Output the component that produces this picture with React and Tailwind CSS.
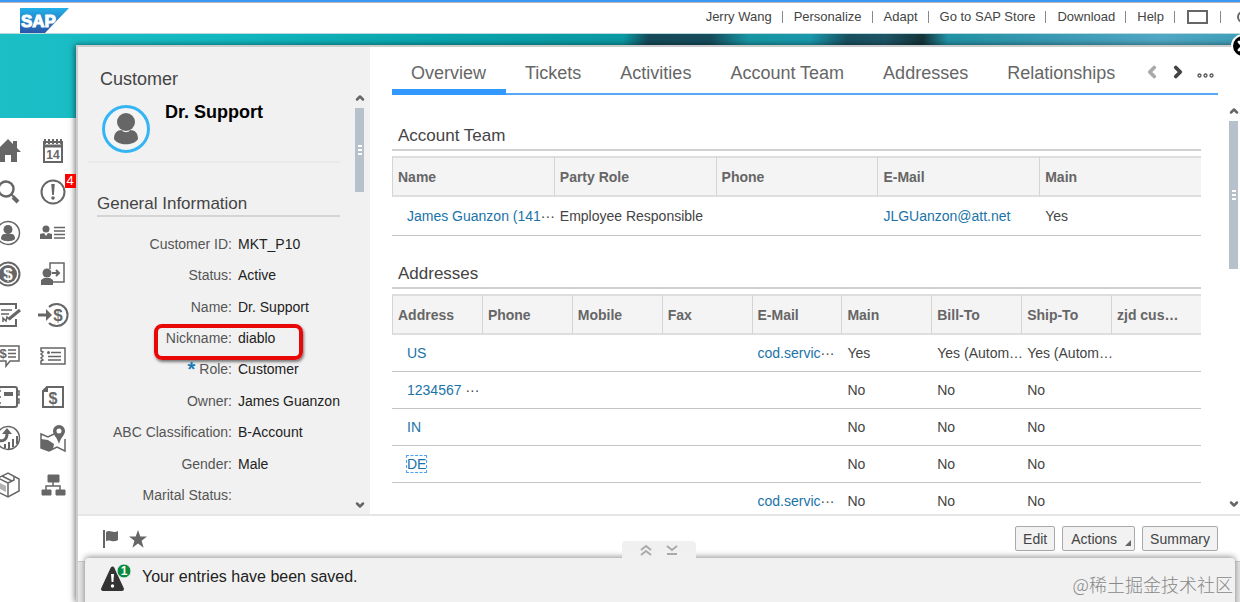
import { useState } from 'react'
import { ChevronDown, ChevronLeft, ChevronRight, ChevronUp, X } from 'lucide-react'

const TOP_LINKS = ['Jerry Wang', 'Personalize', 'Adapt', 'Go to SAP Store', 'Download', 'Help']

const TABS = ['Overview', 'Tickets', 'Activities', 'Account Team', 'Addresses', 'Relationships']

const FIELDS = [
  { label: 'Customer ID', value: 'MKT_P10' },
  { label: 'Status', value: 'Active' },
  { label: 'Name', value: 'Dr. Support' },
  { label: 'Nickname', value: 'diablo', marked: true },
  { label: 'Role', value: 'Customer', required: true },
  { label: 'Owner', value: 'James Guanzon' },
  { label: 'ABC Classification', value: 'B-Account' },
  { label: 'Gender', value: 'Male' },
  { label: 'Marital Status', value: '' },
]

const TEAM_COLUMNS = ['Name', 'Party Role', 'Phone', 'E-Mail', 'Main']
const TEAM_ROWS = [
  [
    { link: 'James Guanzon (141', cut: true },
    'Employee Responsible',
    '',
    { link: 'JLGUanzon@att.net' },
    'Yes',
  ],
]

const ADDRESS_COLUMNS = ['Address', 'Phone', 'Mobile', 'Fax', 'E-Mail', 'Main', 'Bill-To', 'Ship-To', 'zjd cus…']
const ADDRESS_ROWS = [
  [{ link: 'US' }, '', '', '', { link: 'cod.servic', cut: true }, 'Yes', 'Yes (Autom…', 'Yes (Autom…', ''],
  [{ link: '1234567 ', cut: true }, '', '', '', '', 'No', 'No', 'No', ''],
  [{ link: 'IN' }, '', '', '', '', 'No', 'No', 'No', ''],
  [{ link: 'DE', focused: true }, '', '', '', '', 'No', 'No', 'No', ''],
  ['', '', '', '', { link: 'cod.servic', cut: true }, 'No', 'No', 'No', ''],
]

function Glyph({ children }) {
  return (
    <svg
      viewBox="0 0 26 26"
      className="w-[26px] h-[26px] overflow-visible"
      fill="none"
      stroke="currentColor"
      strokeWidth="2"
    >
      {children}
    </svg>
  )
}

function Dollar({ x = 13, y = 18, size = 15 }) {
  return (
    <text
      x={x}
      y={y}
      fontSize={size}
      fontWeight="bold"
      textAnchor="middle"
      fill="currentColor"
      stroke="none"
    >
      $
    </text>
  )
}

// Icons of the side menu, left and right column in turn
const MENU = [
  {
    name: 'Home',
    icon: (
      <Glyph>
        <path d="M13 1 0 14h4v10h6v-7h6v7h6V14h4l-4-4V3h-4v3z" fill="currentColor" stroke="none" />
      </Glyph>
    ),
  },
  {
    name: 'Calendar',
    icon: (
      <Glyph>
        <path d="M4 4h18v20H4z" />
        <path d="M4 8h18" strokeWidth="3" />
        <path d="M5 1v5M9 1v5M13 1v5M17 1v5M21 1v5" strokeWidth="2" />
        <text x="13" y="21" fontSize="12" fontWeight="bold" textAnchor="middle" fill="currentColor" stroke="none">
          14
        </text>
      </Glyph>
    ),
  },
  {
    name: 'Search',
    icon: (
      <Glyph>
        <circle cx="11" cy="10" r="7.5" strokeWidth="2.5" />
        <path d="m16 15 3 3" strokeWidth="2" />
        <path d="m18 18 5 5" strokeWidth="4" />
      </Glyph>
    ),
  },
  {
    name: 'Alerts',
    badge: 4,
    icon: (
      <Glyph>
        <circle cx="13" cy="13" r="11.5" />
        <path d="M11.2 5h3.6l-1 11h-1.6z" fill="currentColor" stroke="none" />
        <circle cx="13" cy="19" r="1.8" fill="currentColor" stroke="none" />
      </Glyph>
    ),
  },
  {
    name: 'People',
    icon: (
      <Glyph>
        <circle cx="13" cy="13" r="11.5" strokeWidth="1.5" />
        <circle cx="13" cy="9.5" r="4.5" fill="currentColor" stroke="none" />
        <path d="M10 14c-3 0-4 2-4 5 3 3 11 3 14 0 0-3-1-5-4-5z" fill="currentColor" stroke="none" />
      </Glyph>
    ),
  },
  {
    name: 'Contacts',
    icon: (
      <Glyph>
        <circle cx="6" cy="9" r="3.5" fill="currentColor" stroke="none" />
        <path d="M0 19v-5l4-1 2 3 2-3 4 1v5z" fill="currentColor" stroke="none" />
        <path d="M14 7.500h11M14 11h11M14 14.500h11M14 18h11" strokeWidth="1.500" />
      </Glyph>
    ),
  },
  {
    name: 'Sales',
    icon: (
      <Glyph>
        <circle cx="13" cy="13" r="11.500" strokeWidth="2" />
        <circle cx="13" cy="13" r="9" fill="currentColor" stroke="none" />
        <text x="13" y="19" fontSize="17" fontWeight="bold" textAnchor="middle" fill="white" stroke="none">
          $
        </text>
      </Glyph>
    ),
  },
  {
    name: 'Visits',
    icon: (
      <Glyph>
        <path d="M10 8V2h14v19H13" strokeWidth="1.500" />
        <circle cx="7" cy="12" r="4.500" fill="currentColor" stroke="none" />
        <path d="M1 24v-5l3-2h6l3 2v5z" fill="currentColor" stroke="none" />
        <path d="M12 12h7m-3-3 3 3-3 3" />
      </Glyph>
    ),
  },
  {
    name: 'Surveys',
    icon: (
      <Glyph>
        <path d="M21 17v7H3V2h18v5" />
        <path d="M6 8h11M6 12h8" strokeWidth="1.500" />
        <path d="M8 20v-4l3 3 1-4 3 3" strokeWidth="1.500" />
        <path d="M14 17 25 8" strokeWidth="3" />
      </Glyph>
    ),
  },
  {
    name: 'Leads',
    icon: (
      <Glyph>
        <path d="M9 5a11 11 0 1 1 0 16" />
        <path d="M-2 13h10" strokeWidth="3" />
        <path d="m6 7 6 6-6 6z" fill="currentColor" stroke="none" />
        <Dollar x={18} y={19} size={17} />
      </Glyph>
    ),
  },
  {
    name: 'Quotes',
    icon: (
      <Glyph>
        <path d="M2 3h22v15h-9l-4 5v-5H2z" strokeWidth="1.500" />
        <Dollar x={8} y={15} size={13} />
        <path d="M13 7h8M13 10.500h8M13 14h8" strokeWidth="1.500" />
      </Glyph>
    ),
  },
  {
    name: 'Tickets',
    icon: (
      <Glyph>
        <path d="M1 5h24v16H1v-3l2-1-2-2 2-2-2-2 2-2-2-1z" strokeWidth="1.500" />
        <path d="M11 9.500h10M8 13.500h13M8 17h13" strokeWidth="1.500" />
        <circle cx="8.500" cy="9.500" r="1.500" fill="currentColor" stroke="none" />
      </Glyph>
    ),
  },
  {
    name: 'Catalog',
    icon: (
      <Glyph>
        <rect x="4" y="3" width="18" height="20" rx="2" />
        <path d="M9 8h9v4H9z" fill="currentColor" stroke="none" />
        <path d="M2 7h4M2 13h4M2 19h4M22 7h2v4h-2M22 15h2v4h-2" strokeWidth="1.500" />
      </Glyph>
    ),
  },
  {
    name: 'Invoices',
    icon: (
      <Glyph>
        <path d="M7 3h16v20H3V7z" />
        <path d="M8 2v6H2z" fill="currentColor" stroke="none" />
        <Dollar x={13} y={20} size={16} />
      </Glyph>
    ),
  },
  {
    name: 'Forecasts',
    icon: (
      <Glyph>
        <circle cx="13" cy="13" r="11.500" strokeWidth="1.500" />
        <path d="M2 15c6 2 10 0 10-6" strokeWidth="3" />
        <path d="m7 9 5-6 5 6z" fill="currentColor" stroke="none" />
        <path d="M10 23v-4M14 24v-7M18 22v-8M22 19v-8" />
      </Glyph>
    ),
  },
  {
    name: 'Territories',
    icon: (
      <Glyph>
        <path d="M14 9 8 12 1 9v14l8 3 8-4 8 4V14" strokeWidth="1.500" />
        <path d="m1 14 7 1 6 4-1 5-4 2-8-3z" fill="currentColor" stroke="none" />
        <path
          d="M19 0a6 6 0 0 0-6 6c0 4 4 6 6 13 2-7 6-9 6-13a6 6 0 0 0-6-6m0 3.500a2.500 2.500 0 1 1 0 5 2.500 2.500 0 0 1 0-5"
          fill="currentColor"
          stroke="none"
        />
      </Glyph>
    ),
  },
]

const MENU_MORE = [
  {
    name: 'Products',
    icon: (
      <Glyph>
        <path d="m3 6 10-5 11 6v12l-11 6-10-5z" strokeWidth="1.500" />
        <path d="m3 6 10 5v14M13 11l6-3V5M7 4l10 5" strokeWidth="1.500" />
        <path d="m5 11 6 3v6l-6-3z" fill="currentColor" stroke="none" opacity="0.500" />
      </Glyph>
    ),
  },
  {
    name: 'Organization',
    icon: (
      <Glyph>
        <path d="M8 3h11v7H8zM2 18h9v5H2zM16 18h9v5h-9z" fill="currentColor" strokeWidth="1" />
        <path d="M13 10v4M6 18v-4h14v4" strokeWidth="1.500" />
      </Glyph>
    ),
  },
]

function MenuGroup({ items }) {
  return (
    <ul className="grid grid-cols-2 w-[90px] -ml-[15px]">
      {items.map((item) => (
        <li key={item.name} className="h-[41px] flex items-center justify-center">
          <button type="button" aria-label={item.name} className="relative">
            {item.icon}
            {item.badge && (
              <span className="absolute -top-[5px] left-[25px] w-[11px] h-[14px] bg-[#f00] text-white text-[13px] leading-[14px] text-center">
                {item.badge}
              </span>
            )}
          </button>
        </li>
      ))}
    </ul>
  )
}

function TopBar() {
  return (
    <header className="h-[34px] shrink-0 border-t-2 border-t-[#3b99f5] bg-white">
      <div className="h-full border-t border-t-[#b9b9b9] border-b border-b-[#b9d9db] flex justify-between overflow-hidden">
        <svg viewBox="0 0 49 25" className="w-[49px] h-[25px] ml-5 mt-[5px] shrink-0" role="img" aria-label="SAP">
          <defs>
            <linearGradient id="sap" x1="0" y1="0" x2="0" y2="1">
              <stop offset="0" stopColor="#22b0e8" />
              <stop offset="1" stopColor="#2a55a8" />
            </linearGradient>
          </defs>
          <path d="M0 0h49L25 25H0z" fill="url(#sap)" />
          <text x="1" y="19" fontSize="17" fontWeight="bold" fill="white" stroke="white" strokeWidth="1">
            SAP
          </text>
        </svg>
        <nav className="flex items-center h-[27px] text-[13px] text-[#444] whitespace-nowrap -mr-[9px]">
          {TOP_LINKS.map((link) => (
            <span key={link} className="flex items-center">
              <a href="#" className="pl-[11px] pr-2.5">{link}</a>
              <span className="w-px h-3 bg-[#888]" />
            </span>
          ))}
          <button type="button" aria-label="Full screen" className="mx-3 w-[21px] h-[14px] border-2 border-[#666]" />
          <span className="w-px h-3 bg-[#888]" />
          <button type="button" aria-label="Search" className="ml-4 w-3 h-3 rounded-full border-2 border-[#666]" />
        </nav>
      </div>
    </header>
  )
}

function ScrollBar({ thumb }) {
  return (
    <div className="w-[9px] shrink-0 flex flex-col items-center text-[#666]">
      <ChevronUp className="w-3 h-3 shrink-0" strokeWidth={5} />
      <div className={`w-full mt-1 bg-[#b7c1cc] flex flex-col items-center justify-center gap-[2px] ${thumb}`}>
        <span className="w-1 h-[2px] bg-white" />
        <span className="w-1 h-[2px] bg-white" />
        <span className="w-1 h-[2px] bg-white" />
      </div>
      <ChevronDown className="w-3 h-3 shrink-0 mt-auto" strokeWidth={5} />
    </div>
  )
}

function Avatar() {
  return (
    <svg viewBox="0 0 48 48" className="w-12 h-12 shrink-0" role="img" aria-label="Dr. Support">
      <circle cx="24" cy="24" r="22.500" fill="#f4f4f4" stroke="#35b5f4" strokeWidth="3" />
      <circle cx="24" cy="17" r="9" fill="#666" />
      <path d="M20 25c-5 0-8 3-8 9 4 7 20 7 24 0 0-6-3-9-8-9-1 3-7 3-8 0" fill="#666" />
    </svg>
  )
}

function CustomerPanel() {
  return (
    <aside className="w-[292px] shrink-0 bg-[#f1f1f1] flex flex-col">
      <h1 className="pt-5 pl-[22px] text-lg leading-6 text-[#444]">Customer</h1>
      <div className="flex-1 min-h-0 flex pr-1.5 pt-px pb-[3px]">
        <div className="flex-1 min-w-0 flex flex-col overflow-hidden">
          <div className="ml-2.5 mr-[15px] pt-[13px] pl-3.5 pb-2 flex gap-[15px] border-b-2 border-[#e9e9e9]">
            <Avatar />
            <h2 className="text-lg leading-[14px] font-bold text-black">Dr. Support</h2>
          </div>
          <h3 className="mt-[31px] ml-[19px] mr-[15px] pb-px border-b-2 border-[#d4d4d4] text-[17px] leading-5 text-[#444]">
            General Information
          </h3>
          <dl className="flex-1 pt-[11px] flex flex-col text-sm">
            {FIELDS.map((field) => (
              <div key={field.label} className="relative flex-1 flex items-center gap-1.5">
                <dt className="w-[154px] flex justify-end gap-1 text-[#555]">
                  {field.required && <span className="font-bold text-xl leading-5 text-[#1a7ab5]">*</span>}
                  {field.label}:
                </dt>
                <dd className="text-[#222]">{field.value}</dd>
                {field.marked && (
                  <span className="absolute left-[76px] top-[2px] w-[149px] h-9 rounded-lg border-4 border-[#e90808] shadow-[1px_2px_3px_rgba(0,0,0,0.5)]" />
                )}
              </div>
            ))}
          </dl>
        </div>
        <ScrollBar thumb="h-[84px]" />
      </div>
    </aside>
  )
}

function Cell({ value }) {
  if (typeof value === 'string') return value
  return (
    <>
      <a href="#" className={value.focused ? 'text-[#1a73a8] outline outline-dashed outline-[#4da3ff]' : 'text-[#1a73a8]'}>
        {value.link}
      </a>
      {value.cut && <span>···</span>}
    </>
  )
}

function DataTable({ title, columns, rows, rowClass }) {
  return (
    <section>
      <h3 className="h-[27px] pl-1.5 border-b-2 border-[#d0d0d0] text-[17px] leading-6 text-[#444]">{title}</h3>
      <table className="w-full mt-[5px] table-fixed border-separate border-spacing-0 text-sm text-[#444] whitespace-nowrap">
        <thead>
          <tr className="h-[41px]">
            {columns.map((column) => (
              <th
                key={column}
                className="p-0 pl-[5px] text-left font-bold text-[#666] bg-[#f4f4f4] border-y-2 border-l border-y-[#dedede] border-l-[#d4d4d4]"
              >
                {column}
              </th>
            ))}
          </tr>
        </thead>
        <tbody>
          {rows.map((row, i) => (
            <tr key={i} className={rowClass}>
              {row.map((value, j) => (
                <td key={j} className="p-0 pl-1.5 first:pl-[15px] border-b border-[#c4c4c4]">
                  <Cell value={value} />
                </td>
              ))}
            </tr>
          ))}
        </tbody>
      </table>
    </section>
  )
}

function Tabs() {
  const [active, setActive] = useState('Overview')
  return (
    <div className="h-12 ml-[22px] mr-[22px] shrink-0 flex border-b-2 border-[#57a9f8]">
      <div role="tablist" className="flex h-12">
        {TABS.map((tab) => (
          <button
            key={tab}
            type="button"
            role="tab"
            aria-selected={active === tab}
            onClick={() => setActive(tab)}
            className={`pl-[19px] pr-5 pt-[9px] text-lg leading-7 text-[#666] whitespace-nowrap border-b-[6px] ${
              active === tab ? 'border-[#3399ff]' : 'border-transparent'
            }`}
          >
            {tab}
          </button>
        ))}
      </div>
      <div className="flex-1 pt-[3px] pr-1 flex items-center justify-end gap-2">
        <button type="button" aria-label="Previous tabs">
          <ChevronLeft className="w-[18px] h-[18px] text-[#aaa]" strokeWidth={5} />
        </button>
        <button type="button" aria-label="Next tabs">
          <ChevronRight className="w-[18px] h-[18px] text-[#444]" strokeWidth={5} />
        </button>
        <button type="button" aria-label="More tabs" className="pl-[2px] pt-2">
          <svg viewBox="0 0 17 5" className="w-[17px] h-[5px]" fill="none" stroke="#555" strokeWidth="1.300">
            <circle cx="2.500" cy="2.500" r="1.500" />
            <circle cx="8.500" cy="2.500" r="1.500" />
            <circle cx="14.500" cy="2.500" r="1.500" />
          </svg>
        </button>
      </div>
    </div>
  )
}

function FooterButton({ children, menu }) {
  return (
    <button
      type="button"
      className={`relative h-[25px] border border-[#aaa] rounded-xs bg-[#f2f2f2] text-sm leading-5 text-[#444] ${
        menu ? 'pl-2 pr-[17px]' : 'px-[7px]'
      }`}
    >
      {children}
      {menu && (
        <svg viewBox="0 0 6 6" className="absolute right-[3px] bottom-1 w-1.5 h-1.5" fill="#666">
          <path d="M6 0v6H0z" />
        </svg>
      )}
    </button>
  )
}

function DialogFooter() {
  return (
    <footer className="h-[47px] shrink-0 pl-[25px] pr-[22px] flex items-center justify-between border-t-2 border-[#e6e6e6]">
      <div className="flex items-center gap-2.5 text-[#666]">
        <button type="button" aria-label="Flag">
          <svg viewBox="0 0 16 18" className="w-4 h-[18px]" fill="currentColor">
            <path d="M0 0h2v18H0zM3 2c4-3 7 2 12-1v9c-5 3-8-1-12 1z" />
          </svg>
        </button>
        <button type="button" aria-label="Favorite">
          <svg viewBox="0 0 18 18" className="w-[18px] h-[18px]" fill="currentColor">
            <path d="m9 0 2.300 6.500H18l-5.400 4.200 2 7L9 13.500l-5.600 4.200 2-7L0 6.500h6.700z" />
          </svg>
        </button>
      </div>
      <div className="flex gap-[7px]">
        <FooterButton>Edit</FooterButton>
        <FooterButton menu>Actions</FooterButton>
        <FooterButton>Summary</FooterButton>
      </div>
    </footer>
  )
}

function Toast() {
  return (
    <div className="relative h-[41px] shrink-0 pl-[7px] pr-[5px] bg-[#e6e6e6] border-t border-[#ccc]">
      <div
        role="status"
        className="h-[50px] -mt-1 pl-[15px] pt-1.5 flex gap-2.5 rounded-t bg-[#f1f1f1] shadow-[0_-1px_6px_rgba(0,0,0,0.45)]"
      >
        <svg viewBox="0 0 32 28" className="w-8 h-7 shrink-0">
          <path d="M12.500 4.500 3 25h19z" fill="#333" stroke="#333" strokeWidth="4" strokeLinejoin="round" />
          <path d="M11 10h3l-.6 8h-1.800z" fill="white" />
          <circle cx="12.500" cy="22" r="1.700" fill="white" />
          <circle cx="24" cy="7" r="7" fill="#0a8a3c" stroke="#f1f1f1" />
          <text x="24" y="11" fontSize="12" fontWeight="bold" textAnchor="middle" fill="white">1</text>
        </svg>
        <p className="text-base leading-[26px] text-[#222]">Your entries have been saved.</p>
      </div>
      <div className="absolute -top-[21px] left-1/2 -translate-x-1/2 w-[74px] h-[18px] rounded-t bg-[#f0f0f0] text-[#aaa] flex items-center justify-center gap-3.5">
        <button type="button" aria-label="Expand messages">
          <svg viewBox="0 0 12 12" className="w-3 h-3" fill="none" stroke="currentColor" strokeWidth="2">
            <path d="m1 6 5-4 5 4M1 11l5-4 5 4" />
          </svg>
        </button>
        <button type="button" aria-label="Close messages">
          <svg viewBox="0 0 12 12" className="w-3 h-3" fill="none" stroke="currentColor" strokeWidth="2">
            <path d="m1 2 5 4 5-4M1 10h10" />
          </svg>
        </button>
      </div>
    </div>
  )
}

export default function App() {
  return (
    <div className="h-screen flex flex-col overflow-hidden bg-white font-['Liberation_Sans',Arial,'Noto_Sans_CJK_SC',sans-serif]">
      <TopBar />
      <div className="relative flex-1 min-h-0 flex bg-no-repeat bg-[length:100%_84px] bg-[linear-gradient(95deg,#1dbfc6_0%,#12b8c0_18%,#0aa5ae_35%,#0b99a3_50%,#154a58_52%,#164c5c_57%,#1795a3_60%,#1a98ac_65%,#18505e_68%,#1d5566_71%,#143438_74%,#2292a5_76%,#3c9bb5_85%,#50a8c4_93%,#3f9fb8_100%)]">
        <nav aria-label="Work centers" className="w-[76px] shrink-0 pt-[96px] text-[#666]">
          <MenuGroup items={MENU} />
          <div className="pt-1.5">
            <MenuGroup items={MENU_MORE} />
          </div>
        </nav>
        <main className="flex-1 min-w-0 mt-[11px] flex flex-col bg-white border-t-2 border-l-2 border-[#cdcdcd] shadow-[-1px_0_6px_rgba(0,0,0,0.55)]">
          <div className="flex-1 min-h-0 flex">
            <CustomerPanel />
            <div className="flex-1 min-w-0 flex flex-col">
              <Tabs />
              <div className="flex-1 min-h-0 flex pt-2.5 pb-1 pr-[2px]">
                <div className="flex-1 min-w-0 pl-[22px] pr-[28px] pt-[19px] -mb-1 flex flex-col gap-[26px] overflow-hidden">
                  <DataTable title="Account Team" columns={TEAM_COLUMNS} rows={TEAM_ROWS} rowClass="h-[39px]" />
                  <DataTable title="Addresses" columns={ADDRESS_COLUMNS} rows={ADDRESS_ROWS} rowClass="h-[37px]" />
                </div>
                <ScrollBar thumb="h-[148px]" />
              </div>
            </div>
          </div>
          <DialogFooter />
          <Toast />
        </main>
        <button
          type="button"
          aria-label="Close"
          className="absolute top-0 -right-[15px] w-6 h-6 rounded-full bg-black border-2 border-white text-white flex items-center justify-center"
        >
          <X className="w-4 h-4" strokeWidth={4} />
        </button>
        <p className="absolute right-[7px] bottom-1.5 text-lg leading-6 font-light text-[#888] font-['Noto_Sans_CJK_SC',sans-serif]">
          @稀土掘金技术社区
        </p>
      </div>
    </div>
  )
}
